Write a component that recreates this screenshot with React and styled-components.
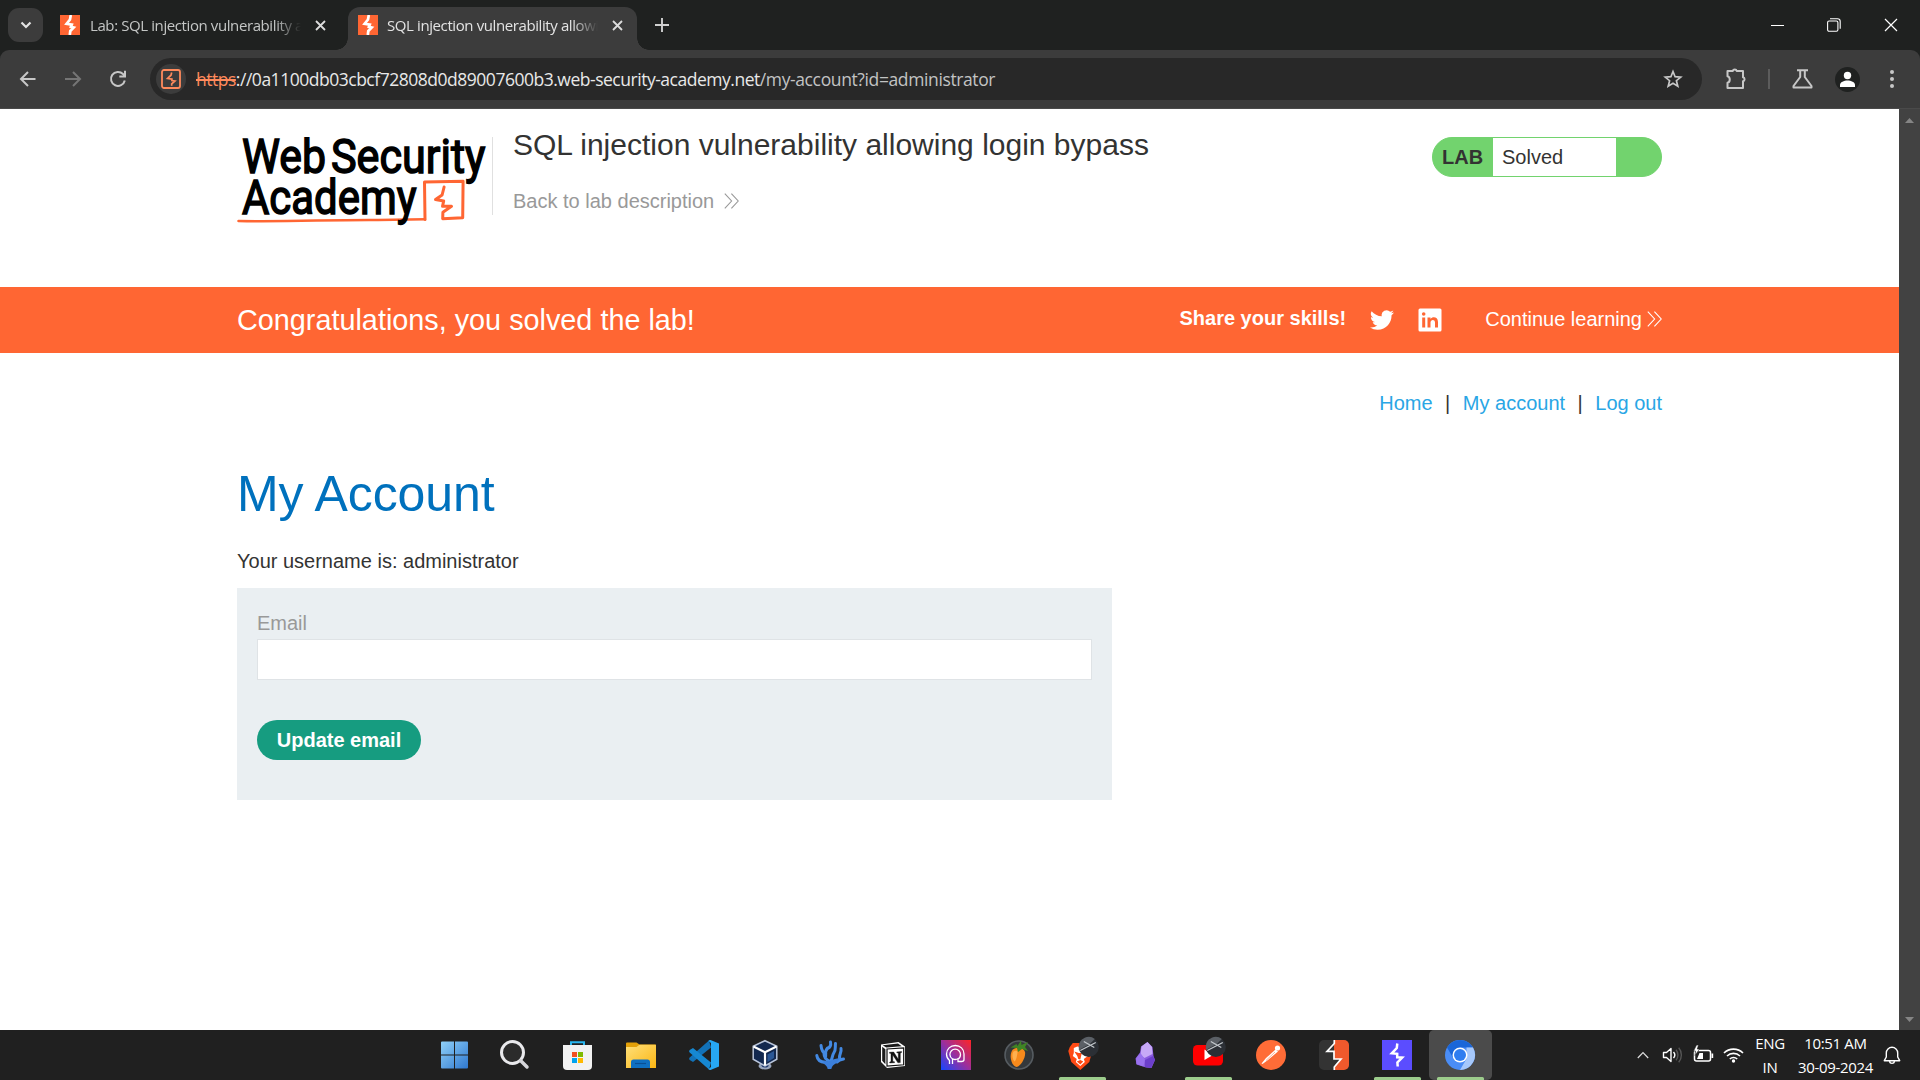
import React from 'react';
import styled, { createGlobalStyle } from 'styled-components';

const Global = createGlobalStyle`
  * { box-sizing: border-box; }
  html, body { margin: 0; padding: 0; }
  body { background: #fff; overflow: hidden; }
  svg { display: block; flex: none; }
`;

const Screen = styled.div`
  width: 1920px;
  height: 1080px;
  display: flex;
  flex-direction: column;
  overflow: hidden;
  font-family: "Liberation Sans", Arial, sans-serif;
`;

/* ---------- browser chrome ---------- */
const ui = `"Open Sans", "Noto Sans", sans-serif`;

const TabStrip = styled.div`
  height: 50px;
  background: #1f2120;
  display: flex;
  align-items: flex-end;
  font-family: ${ui};
`;
const TabSearch = styled.div`
  width: 35px;
  height: 34px;
  margin: 0 5px 8px 8px;
  border-radius: 11px;
  background: #3c3c3c;
  display: grid;
  place-items: center;
`;
const Tab = styled.div`
  height: 43px;
  width: ${p => p.$width}px;
  padding: 0 0 7px ${p => p.$pad}px;
  display: flex;
  align-items: center;
  border-radius: 12px 12px 0 0;
  background: ${p => (p.$active ? '#3c3c3c' : 'transparent')};
  color: ${p => (p.$active ? '#e3e3e3' : '#c4c6c5')};
`;
const TabTitle = styled.div`
  width: 211px;
  margin: 0 14px 0 ${p => p.$left}px;
  overflow: hidden;
  white-space: nowrap;
  font-size: 15px;
  line-height: 22px;
  letter-spacing: -0.4px;
  mask-image: linear-gradient(90deg, #000 185px, transparent 211px);
`;
const TabCurve = styled.div`
  width: 12px;
  height: 12px;
  background: radial-gradient(circle at ${p => (p.$left ? '0 0' : '100% 0')}, transparent 11.5px, #3c3c3c 12px);
`;
const NewTab = styled.div`
  width: 26px;
  height: 50px;
  display: grid;
  place-items: center;
`;
const WindowButtons = styled.div`
  margin-left: auto;
  height: 50px;
  display: flex;
  align-items: center;
  gap: 43px;
  padding-right: 22px;
`;
const ToolbarBack = styled.div`background: #1f2120;`;
const Toolbar = styled.div`
  height: 59px;
  border-radius: 9px 9px 0 0;
  background: #3c3c3c;
  border-bottom: 1px solid #4a4a4a;
  display: flex;
  align-items: center;
  font-family: ${ui};
`;
const NavButtons = styled.div`
  width: 150px;
  display: flex;
  gap: 25px;
  padding-left: 17.5px;
`;
const AddressBar = styled.div`
  width: 1552px;
  height: 42px;
  border-radius: 21px;
  background: #282828;
  display: flex;
  align-items: center;
  padding: 0 19px 0 6px;
`;
const SiteBadge = styled.div`
  width: 30px;
  height: 30px;
  border-radius: 15px;
  background: #3c3c3c;
  display: grid;
  place-items: center;
  margin-right: 10px;
`;
const Url = styled.div`
  flex: 1;
  font-size: 17.5px;
  line-height: 26px;
  letter-spacing: -0.48px;
  white-space: nowrap;
  color: #e8e8e8;
`;
const Scheme = styled.span`
  color: #ff8a5c;
  text-decoration: line-through;
  text-decoration-thickness: 2px;
`;
const UrlPath = styled.span`
  color: #c2c3c3;
  letter-spacing: -0.38px;
`;
const ToolbarIcons = styled.div`
  display: flex;
  align-items: center;
  padding-left: 22px;
`;
const Divider = styled.div`
  width: 2px;
  height: 20px;
  background: #5c5c5c;
  margin: 0 22px 0 20px;
`;
const Avatar = styled.div`
  width: 25px;
  height: 25px;
  border-radius: 50%;
  background: #1f2120;
  display: grid;
  place-items: center;
  margin: 0 30px 0 21px;
`;

/* ---------- web page ---------- */
const Viewport = styled.div`
  height: 921px;
  display: flex;
  background: #fff;
`;
const Page = styled.main`
  width: 1899px;
  color: #333332;
  font-size: 20px;
  line-height: 30px;
`;
const Scrollbar = styled.div`
  width: 21px;
  background: #424242;
  display: flex;
  flex-direction: column;
  justify-content: space-between;
  align-items: center;
  padding: 9px 0 8px;
`;
const Container = styled.div`
  width: 1425px;
  margin: 0 auto;
`;
const LabHeader = styled(Container)`
  height: 178px;
  display: flex;
`;
const LogoBox = styled.div`
  width: 256px;
  height: 78px;
  margin-top: 28px;
  border-right: 1px solid #e0e0e0;
`;
const TitleBox = styled.div`
  flex: 1;
  padding: 17px 0 0 20px;
`;
const LabTitle = styled.h2`
  margin: 0;
  font-size: 30px;
  line-height: 38px;
  font-weight: 400;
  white-space: nowrap;
`;
const BackLink = styled.a`
  display: flex;
  align-items: center;
  gap: 10px;
  margin-top: 22px;
  color: #999;
`;
const LabStatus = styled.div`
  width: 230px;
  height: 40px;
  margin-top: 28px;
  border: 1px solid #72d36e;
  border-radius: 20px;
  background: #72d36e;
  overflow: hidden;
  display: flex;
  line-height: 38px;
`;
const LabTag = styled.div`
  width: 60px;
  padding-left: 9px;
  font-weight: 700;
`;
const LabState = styled.div`
  width: 123px;
  padding-left: 9px;
  background: #fff;
`;
const Banner = styled.section`
  height: 66px;
  background: #ff6633;
  color: #fff;
`;
const BannerRow = styled(Container)`
  height: 66px;
  display: flex;
  align-items: center;
`;
const Congrats = styled.div`
  flex: 1;
  font-size: 28.8px;
`;
const Share = styled.div`
  font-weight: 700;
  padding-bottom: 4px;
`;
const ShareIcons = styled.div`
  display: flex;
  gap: 24px;
  margin: 0 43px 0 24px;
`;
const Continue = styled.div`
  display: flex;
  align-items: center;
  gap: 5px;
  padding-bottom: 2px;
`;
const TopLinks = styled(Container)`
  margin-top: 35px;
  display: flex;
  justify-content: flex-end;
  gap: 12.5px;
`;
const Link = styled.a`color: #29a6e5;`;
const Heading = styled.h1`
  margin: 45px 0 0;
  font-size: 50px;
  line-height: 62px;
  letter-spacing: -0.1px;
  font-weight: 400;
  color: #0071bd;
`;
const Username = styled.p`margin: 21px 0 0;`;
const Form = styled.form`
  width: 875px;
  height: 212px;
  margin-top: 12px;
  padding: 20px;
  background: #eaeff2;
`;
const Label = styled.label`
  display: block;
  color: #999;
`;
const Input = styled.input`
  display: block;
  width: 835px;
  height: 41px;
  margin-top: 1px;
  border: 1px solid #dfe3e6;
  background: #fff;
  outline: none;
`;
const Submit = styled.button`
  display: block;
  width: 164px;
  height: 40px;
  margin-top: 40px;
  padding: 0;
  border: 0;
  border-radius: 20px;
  background: #169c80;
  color: #fff;
  font: 700 20px/40px "Liberation Sans", Arial, sans-serif;
`;

/* ---------- taskbar ---------- */
const Taskbar = styled.footer`
  height: 50px;
  background: #202020;
  display: flex;
  padding-left: 421px;
  font-family: ${ui};
  color: #fff;
`;
const TaskItem = styled.div`
  width: 63px;
  height: 50px;
  display: flex;
  flex-direction: column;
  align-items: center;
  justify-content: space-between;
  padding-top: 10px;
  border-radius: 5px;
  background: ${p => (p.$active ? '#4b4b4b' : 'transparent')};
`;
const Indicator = styled.div`
  width: 47px;
  height: 3px;
  border-radius: 1.5px 1.5px 0 0;
  background: ${p => (p.$on ? '#9ccc8c' : 'transparent')};
`;
const Tray = styled.div`
  margin-left: auto;
  display: flex;
  align-items: center;
  padding-right: 19px;
`;
const TrayIcons = styled.div`
  display: flex;
  align-items: center;
  gap: 9px;
  margin-right: 9px;
`;
const TrayArrow = styled.div`margin-right: 4px;`;
const TrayText = styled.div`
  width: ${p => p.$width}px;
  text-align: center;
  font-size: 15px;
  line-height: 24px;
  letter-spacing: ${p => p.$track}px;
  white-space: nowrap;
  margin-right: ${p => p.$gap}px;
`;

/* ---------- drawings ---------- */
const Favicon = () => (
  <svg width="20" height="20" viewBox="0 0 20 20">
    <rect width="20" height="20" fill="#ff6633" />
    <path d="M10.800 0L10 4.500 6.600 8.800l5.200.8-.9 2.300 2.800.7L10.300 16l-.5 4" fill="none" stroke="#fff" strokeWidth="2.700" />
  </svg>
);
const Cross = ({ size = 11, w = 1.8, color = '#dcdcdc' }) => (
  <svg width={size} height={size} viewBox={`0 0 ${size} ${size}`}>
    <path d={`M1 1L${size - 1} ${size - 1}M${size - 1} 1L1 ${size - 1}`} stroke={color} strokeWidth={w} />
  </svg>
);
const Chevrons = ({ color }) => (
  <svg width="15" height="16" viewBox="0 0 15 16">
    <path d="M.8.6L7.6 8 .8 15.4M7.4.6L14.2 8l-6.8 7.4" fill="none" stroke={color} strokeWidth="1.1" />
  </svg>
);
const AcademyLogo = () => (
  <svg width="254" height="92" viewBox="237 137 254 92">
    <g fill="none" stroke="#ff6633" strokeLinejoin="round" strokeLinecap="round">
      <path d="M238.500 221C290 222 330 219.600 378 220L425 219.200" strokeWidth="2.500" />
      <path d="M425 219.400L424.500 182l38.600-.8-.4 36.600-20 1 .2-6.500 8.600-6h-9l1.200-5.300-8.200-1.500 6.600-4.500 2-8" strokeWidth="3" />
    </g>
    <g fill="#000" stroke="#000" strokeWidth="1.500" fontFamily="Roboto, sans-serif" fontWeight="400" fontSize="47.500">
      <text x="242" y="172.500" textLength="84" lengthAdjust="spacingAndGlyphs">Web</text>
      <text x="331" y="172.500" textLength="154.500" lengthAdjust="spacingAndGlyphs">Security</text>
      <text x="242" y="213.500" textLength="174.500" lengthAdjust="spacingAndGlyphs">Academy</text>
    </g>
  </svg>
);

const V = ({ children, shift = 0 }) => (
  <svg width="31" height="33" viewBox="0 -3 31 33" style={{ marginTop: -3 }} overflow="visible">
    <g transform={`translate(${shift} 0)`}>{children}</g>
  </svg>
);

const Planet = () => (
  <g>
    <circle cx="21" cy="7" r="10" fill="#2b2f35" />
    <path d="M11 6A10 10 0 0 1 27 -1l-5 5-11 6z" fill="#5b6066" />
    <path d="M12.500 10.500L28 2.500M16 1.500L26.500 7.500" stroke="#c3c8cc" strokeWidth="1.300" />
  </g>
);

const apps = [
  { icon: (
    <V shift={3}>
      <defs><linearGradient id="win" x1="0" y1="0" x2="1" y2="1"><stop offset="0" stopColor="#8fd0f8" /><stop offset="1" stopColor="#2f78d0" /></linearGradient></defs>
      <path d="M1 2.500a1 1 0 0 1 1-1h12v13H1zM15 1.500H27a1 1 0 0 1 1 1v12H15zM1 15.500h13v13H2a1 1 0 0 1-1-1zM15 15.500H28v12a1 1 0 0 1-1 1H15z" fill="url(#win)" />
    </V>) },
  { icon: (
    <V>
      <circle cx="12.500" cy="12.500" r="11" fill="rgba(255,255,255,.05)" stroke="#e9e9ec" strokeWidth="3" />
      <path d="M20.500 20.500l6.500 6.500" stroke="#d6d6da" strokeWidth="3.500" strokeLinecap="round" />
    </V>) },
  { icon: (
    <V>
      <path d="M8 7V2.200h13V7" fill="none" stroke="#29b6f0" strokeWidth="2" />
      <path d="M0 5h29v21a4 4 0 0 1-4 4H4a4 4 0 0 1-4-4z" fill="#f2f2f2" />
      <path d="M9 12h5v5H9z" fill="#f25022" /><path d="M15 12h5v5h-5z" fill="#7fba00" />
      <path d="M9 18h5v5H9z" fill="#00a4ef" /><path d="M15 18h5v5h-5z" fill="#ffb900" />
    </V>) },
  { icon: (
    <V>
      <defs><linearGradient id="fold" x1="0" y1="0" x2="1" y2="1"><stop offset="0" stopColor="#ffe07a" /><stop offset="1" stopColor="#fbb613" /></linearGradient></defs>
      <path d="M0 3.500a1 1 0 0 1 1-1h9.500l3 2H29a1 1 0 0 1 1 1V12H0z" fill="#e3a008" />
      <path d="M0 7h10.500l3-2.200H30V28H0z" fill="url(#fold)" />
      <path d="M5 28v-6a2.500 2.500 0 0 1 2.500-2.500h14A2.500 2.500 0 0 1 24 22v6z" fill="#0f6fc0" />
      <path d="M9 23.500h11" stroke="#0a4f94" strokeWidth="1.200" />
    </V>) },
  { icon: (
    <V>
      <path d="M22 7.500L4 22l-3.300-2c-.8-.8-.7-1.800 0-2.500L20 .500z" fill="#1272b8" />
      <path d="M22 22.500L4 8 .700 10c-.8.800-.7 1.800 0 2.500L20 29.500z" fill="#1688d2" />
      <path d="M21.500 0L30 3.500v23L21.500 30c-1 0-1.500-.3-2-1l2.500-2V3l-2.500-2c.5-.7 1-1 2-1z" fill="#27a7f2" />
    </V>) },
  { icon: (
    <V>
      <ellipse cx="13" cy="26" rx="6.500" ry="3.500" fill="#9aa6bd" />
      <ellipse cx="13" cy="25.500" rx="3.500" ry="2" fill="#213c70" />
      <path d="M13 .700l11.800 5.500v13L13 26 1.200 19.200v-13z" fill="#12284f" stroke="#b9c5da" strokeWidth="1.500" />
      <path d="M1.500 6.500L13 12.200 24.500 6.500M13 12v13.500" fill="none" stroke="#fff" strokeWidth="2.200" />
      <path d="M15.500 14.500l6.500-3.500v7l-6.500 4z" fill="#2a5796" />
    </V>) },
  { icon: (
    <V>
      <g fill="none" stroke="#4389e2" strokeWidth="3" strokeLinecap="round" strokeLinejoin="round">
        <path d="M1.800 15.500c.5 4.500 3.500 6.500 8.500 7M6 5.500c.5 5 1.500 7 4.800 8.500M9 13.500c0 4 2 6 5 7.500M12.500 8c-2 2.500-2.500 5-1.800 8M15.500 2c.8 4-.5 5.500-3 6.500M20.500 3.500c-.5 4 .5 6-1.500 9s-1.500 6-3 8M26 8.500c.8 4-2 5.500-1.500 10M28.500 19c-3 .5-5 1-6.500 3" />
      </g>
      <path d="M8.500 20.500c3 .8 5.500 1.200 7.500 0 2.500-1.500 5-1.500 8.500-2.500-1 4.500-4 5.500-6.500 7.500-.8 1-1.200 2-1.700 3.500h-3.600c-.5-2.500-1.700-4-4.200-5.500z" fill="#3b7fdb" />
    </V>) },
  { icon: (
    <V shift={2.5}>
      <path d="M.500 4.500L18 2l6.500 4.500v19.500L6.500 28 .500 22z" fill="#fff" />
      <path d="M2.200 5.300L17.500 3.500l3.700 2.700L5.700 7.500zM1.700 6.800L4.900 9.300v15L1.700 20.800z" fill="#1b1b1b" />
      <path d="M6.500 9l16.700-1.200v17L6.500 26.200z" fill="#fff" stroke="#111" strokeWidth="1.200" />
      <path d="M9 12.300l4.200-.3 4.600 7.300v-6.200l-1.500-.4v-.8l4.800-.4v1l-1.300.5v9.600l-2.400.2-5.100-7.900v6.500l1.700.4v.9l-4.800.3v-.9l1.300-.5v-8.200L9 13.200z" fill="#111" stroke="#111" strokeWidth=".4" />
    </V>) },
  { icon: (
    <V>
      <defs><linearGradient id="ai" x1="0" y1="1" x2="1" y2="0"><stop offset="0" stopColor="#1446ff" /><stop offset=".5" stopColor="#9c2f9c" /><stop offset="1" stopColor="#ff2424" /></linearGradient></defs>
      <rect width="30" height="30" fill="url(#ai)" />
      <g fill="none" stroke="#fff" strokeWidth="1.300">
        <path d="M8.500 24v-3.500C6 18.500 5.500 16 5.500 14c0-5 4-8.500 8.800-8.500 5 0 8.700 3.500 8.700 8.500v5.500c0 1.500-1 2-2.500 2h-3.500V19c1.800-1 2.500-2.700 2.500-4.500a5.300 5.300 0 0 0-10.600 0c0 2 1 3.500 2.600 4.500v5" />
        <path d="M17 18.800c-1.300.7-4 .7-5.500 0" />
      </g>
    </V>) },
  { icon: (
    <V>
      <circle cx="15" cy="15" r="14" fill="#34383b" stroke="#565c61" strokeWidth="1.600" />
      <path d="M9 9.500c4-3 11-2 12 2.500 1 5-4 14-8.500 15C7 26 4.500 14 9 9.500z" fill="#f78a1c" />
      <path d="M9.500 11.500c2-1.500 4-1 4 1-.5 4-1.500 8-3 9-2-2-3-8-1-10z" fill="#ffb04e" />
      <path d="M6.500 7.500l6-3.500 1 2 3.500-5.500.5 4.500L24 2l-3 5 3 4-6-2-4 3-1-4z" fill="#3f8424" />
    </V>) },
  { on: true, icon: (
    <V shift={.8}>
      <path d="M5 3h12l5 2 2.500 6-3 11-9 8-9-8L.500 11l1.500-4z" fill="#ff4a14" />
      <path d="M6 8l3.500-1.500 3 .5 3-.5L20 9l-1 4 1 3-4 3 1 3-4.500 4L8 22l1-3-4-3 1-3z" fill="#fff" />
      <path d="M6.500 11.500l4.500 1.500h3l-1.500 6.500-2-.5-1-3zM9 21.500l3.500-1.500 3 1.500-3 3z" fill="#ff4a14" />
      <Planet />
    </V>) },
  { icon: (
    <V shift={3.5}>
      <path d="M14 2l5 5 1 9 1.500 4-3.500 8-5.500-.5L3 24.500l-1-6 4.500-6 1-6z" fill="#8a5be0" />
      <path d="M14 2L8 6.500 7 15l4 3 8-4-.5-7z" fill="#c7a9f7" />
      <path d="M7 13l-4.500 5.500.5 5.500 7 2.500 1.500-7z" fill="#9a72ee" /><path d="M11.500 20l8-4 2 4-4 8-6-1z" fill="#6c3fcb" />
    </V>) },
  { on: true, icon: (
    <V>
      <rect x="0" y="5" width="30" height="20.500" rx="4.500" fill="#f00" />
      <path d="M11.500 9.500l8.500 5.500-8.500 5z" fill="#fff" />
      <g transform="translate(1.800 0)"><Planet /></g>
    </V>) },
  { icon: (
    <V>
      <circle cx="15" cy="15" r="15" fill="#ff6c37" />
      <circle cx="21.500" cy="8" r="2.600" fill="#fff" />
      <path d="M19.500 9.500l2.500 2-10 8.500-5.500 4-1-.5 4.500-5.500z" fill="#fff" />
      <path d="M19 12l-9 8.500" stroke="#ff9c78" strokeWidth=".8" />
    </V>) },
  { icon: (
    <V>
      <path d="M15 0h10a5 5 0 0 1 5 5v20a5 5 0 0 1-5 5H15z" fill="#f0592c" />
      <path d="M15 0H5a5 5 0 0 0-5 5v20a5 5 0 0 0 5 5h10v-3l7.500-8H15z" fill="#333" />
      <path d="M15.300 0v3.500L8 11.300h7v7.700h7L15.300 27v3" fill="none" stroke="#fff" strokeWidth="1.700" />
    </V>) },
  { on: true, icon: (
    <V>
      <rect width="30" height="30" fill="#5b4dff" />
      <path d="M15.300 3.500l-.5 4.500-5 5.300 5.400.5v3.400l5 .3-4.800 5 .3 4" fill="none" stroke="#fff" strokeWidth="2.500" />
    </V>) },
  { on: true, active: true, icon: (
    <V>
      <circle cx="15" cy="15" r="15" fill="#4a8df6" />
      <path d="M2 7.500A15 15 0 0 1 28 7.500H15L8.500 18.500z" fill="#1a66d8" />
      <path d="M28 7.500A15 15 0 0 1 15 30l6.500-11.200 0-11.300z" fill="#a6c8fb" />
      <circle cx="15" cy="15" r="7.500" fill="#fff" /><circle cx="15" cy="15" r="6" fill="#2f7df0" />
    </V>) },
];

export default function App() {
  return (
    <Screen>
      <Global />
      <TabStrip>
        <TabSearch>
          <svg width="12" height="9" viewBox="0 0 12 9"><path d="M1.500 1.500L6 6l4.500-4.500" fill="none" stroke="#e3e3e3" strokeWidth="2.200" /></svg>
        </TabSearch>
        <Tab $width={288} $pad={12}>
          <Favicon />
          <TabTitle $left={10}>Lab: SQL injection vulnerability allowing login bypass</TabTitle>
          <Cross />
        </Tab>
        <TabCurve $left />
        <Tab $width={289} $pad={10} $active>
          <Favicon />
          <TabTitle $left={9}>SQL injection vulnerability allowing login bypass</TabTitle>
          <Cross />
        </Tab>
        <TabCurve />
        <NewTab>
          <svg width="14" height="14" viewBox="0 0 14 14"><path d="M7 0v14M0 7h14" stroke="#d0d0d0" strokeWidth="1.900" /></svg>
        </NewTab>
        <WindowButtons>
          <svg width="13" height="13" viewBox="0 0 13 13"><path d="M0 6.500h13" stroke="#fff" /></svg>
          <svg width="14" height="14" viewBox="0 0 14 14" fill="none" stroke="#fff" strokeWidth="1.100">
            <rect x=".6" y="3" width="10.300" height="10.300" rx="1.500" /><path d="M3 .8h7.500a2.700 2.700 0 0 1 2.700 2.700v7.300" />
          </svg>
          <Cross size={14} w={1.200} color="#fff" />
        </WindowButtons>
      </TabStrip>
      <ToolbarBack>
        <Toolbar>
          <NavButtons>
            <svg width="20" height="20" viewBox="0 0 20 20" fill="none" stroke="#c7c7c7" strokeWidth="2"><path d="M17.500 10H3.500M10 3L3 10l7 7" /></svg>
            <svg width="20" height="20" viewBox="0 0 20 20" fill="none" stroke="#757575" strokeWidth="2"><path d="M2 10h14.500M10 3l7 7-7 7" /></svg>
            <svg width="20" height="20" viewBox="0 0 20 20" fill="none" stroke="#c7c7c7" strokeWidth="2"><path d="M16.800 11.500A7 7 0 1 1 15 5l1.500 1.500M17 1.800v5.700h-5.700" /></svg>
          </NavButtons>
          <AddressBar>
            <SiteBadge>
              <svg width="20" height="20" viewBox="0 0 20 20"><rect x="1" y="1" width="18" height="18" rx="2" fill="none" stroke="#ff8a5c" strokeWidth="1.800" /><path d="M10.700 3.500L10 6.200 6.600 9.500l4.300.6v1.500l3 .4-3.200 2.800v2" fill="none" stroke="#ff8a5c" strokeWidth="1.700" /></svg>
            </SiteBadge>
            <Url><Scheme>https</Scheme>://0a1100db03cbcf72808d0d89007600b3.web-security-academy.net<UrlPath>/my-account?id=administrator</UrlPath></Url>
            <svg width="20" height="20" viewBox="0 0 20 20"><path d="M10 2.500l2.100 5.200 5.600.4-4.300 3.600 1.400 5.500-4.800-3-4.800 3 1.400-5.500L2.300 8.100l5.600-.4z" fill="none" stroke="#c7c7c7" strokeWidth="1.700" /></svg>
          </AddressBar>
          <ToolbarIcons>
            <svg width="24" height="24" viewBox="0 0 24 24"><path d="M3.500 4h5.300a2 2 0 0 1 3.900 0h6.300v6.300a2 2 0 0 1 0 3.900V21H3.500v-5.200c3-.6 3-6 0-6.600z" fill="none" stroke="#c7c7c7" strokeWidth="2" strokeLinejoin="round" /></svg>
            <Divider />
            <svg width="22" height="22" viewBox="0 0 22 22" fill="none" stroke="#c7c7c7" strokeWidth="2" strokeLinejoin="round"><path d="M5 2.200h11M8.200 2.500v6.500L1.500 18v1.500h18V18L12.800 9V2.500" /></svg>
            <Avatar>
              <svg width="17" height="17" viewBox="0 0 17 17" fill="#fff"><circle cx="8.500" cy="4.500" r="3.700" /><path d="M1 16v-2c0-3 4-4.500 7.500-4.500S16 11 16 14v2z" /></svg>
            </Avatar>
            <svg width="4" height="20" viewBox="0 0 4 20" fill="#c7c7c7"><circle cx="2" cy="3" r="2" /><circle cx="2" cy="10" r="2" /><circle cx="2" cy="17" r="2" /></svg>
          </ToolbarIcons>
        </Toolbar>
      </ToolbarBack>

      <Viewport>
        <Page>
          <LabHeader>
            <LogoBox><AcademyLogo /></LogoBox>
            <TitleBox>
              <LabTitle>SQL injection vulnerability allowing login bypass</LabTitle>
              <BackLink>Back to lab description <Chevrons color="#999" /></BackLink>
            </TitleBox>
            <LabStatus>
              <LabTag>LAB</LabTag>
              <LabState>Solved</LabState>
            </LabStatus>
          </LabHeader>
          <Banner>
            <BannerRow>
              <Congrats>Congratulations, you solved the lab!</Congrats>
              <Share>Share your skills!</Share>
              <ShareIcons>
                <svg width="24" height="24" viewBox="0 0 24 24" fill="#fff"><path d="M23.950 4.570a10 10 0 0 1-2.820.770 4.960 4.960 0 0 0 2.160-2.720c-.950.550-2 .950-3.130 1.180a4.920 4.920 0 0 0-8.380 4.480C7.690 8.100 4.070 6.130 1.640 3.160a4.920 4.920 0 0 0 1.520 6.570 4.900 4.900 0 0 1-2.230-.610v.060c0 2.380 1.700 4.370 3.950 4.820a5 5 0 0 1-2.210.090 4.940 4.940 0 0 0 4.600 3.420A9.870 9.870 0 0 1 0 19.540a13.990 13.990 0 0 0 7.550 2.210c9.050 0 14-7.500 14-13.990 0-.210 0-.420-.020-.630a9.940 9.940 0 0 0 2.460-2.550z" /></svg>
                <svg width="24" height="24" viewBox="0 0 24 24"><rect x=".5" y=".5" width="23" height="23" rx="1.500" fill="#fff" /><path d="M4.200 9.500h3v10h-3zM9.500 9.500h3V11c1.800-2.700 7.500-2.500 7.500 3v5.500h-3V14.500c0-3.500-4.500-3.200-4.500 0v5h-3z" fill="#ff6633" /><circle cx="5.700" cy="6" r="1.800" fill="#ff6633" /></svg>
              </ShareIcons>
              <Continue>Continue learning <Chevrons color="#fff" /></Continue>
            </BannerRow>
          </Banner>
          <TopLinks><Link>Home</Link><span>|</span><Link>My account</Link><span>|</span><Link>Log out</Link></TopLinks>
          <Container>
            <Heading>My Account</Heading>
            <Username>Your username is: administrator</Username>
            <Form>
              <Label>Email</Label>
              <Input type="text" />
              <Submit type="button">Update email</Submit>
            </Form>
          </Container>
        </Page>
        <Scrollbar>
          <svg width="9" height="5" viewBox="0 0 9 5"><path d="M0 5L4.500 0 9 5z" fill="#858585" /></svg>
          <svg width="9" height="5" viewBox="0 0 9 5"><path d="M0 0l4.500 5L9 0z" fill="#858585" /></svg>
        </Scrollbar>
      </Viewport>

      <Taskbar>
        {apps.map((a, i) => (
          <TaskItem key={i} $active={a.active}>{a.icon}<Indicator $on={a.on} /></TaskItem>
        ))}
        <Tray>
          <TrayIcons>
            <TrayArrow>
              <svg width="12" height="8" viewBox="0 0 12 8"><path d="M.8 7L6 1.500 11.200 7" fill="none" stroke="#ddd" strokeWidth="1.200" /></svg>
            </TrayArrow>
            <svg width="22" height="20" viewBox="0 0 22 20" fill="none" stroke="#fff" strokeWidth="1.400"><path d="M1.500 7.500h3L9 3.500v13l-4.500-4h-3z" strokeLinejoin="round" /><path d="M11.500 7a4.500 4.500 0 0 1 0 6" /><path d="M14 4.800a8 8 0 0 1 0 10.400M16.700 2.800a11 11 0 0 1 0 14.400" stroke="#555" /></svg>
            <svg width="21" height="20" viewBox="0 0 21 20"><rect x="1.500" y="5.500" width="16" height="10.500" rx="2" fill="none" stroke="#fff" strokeWidth="1.500" /><path d="M18.500 8.500h1.700v4.500h-1.700z" fill="#fff" /><path d="M4 14l2.500-6H10v6z" fill="#fff" /><path d="M3.500 0L.5 6h2l-.5 4.500L6.500 4H4.300L5.500 0z" fill="#fff" stroke="#202020" strokeWidth=".6" /></svg>
            <svg width="21" height="18" viewBox="0 0 21 18" fill="none" stroke="#fff" strokeWidth="1.600"><path d="M1 7a13.500 13.500 0 0 1 19 0M4 10a9.300 9.300 0 0 1 13 0M6.800 13a5.300 5.300 0 0 1 7.400 0" /><circle cx="10.500" cy="15" r="1.700" fill="#fff" stroke="none" /></svg>
          </TrayIcons>
          <TrayText $width={34} $gap={10} $track={-0.3}>ENG<br />IN</TrayText>
          <TrayText $width={77} $gap={9} $track={-0.35}>10:51 AM<br />30-09-2024</TrayText>
          <svg width="18" height="20" viewBox="0 0 18 20"><path d="M3.300 8a5.700 5.700 0 0 1 11.400 0v4l2 3.700H1.300l2-3.700zM6.500 16.500c.5 2.500 4.500 2.500 5 0" fill="none" stroke="#fff" strokeWidth="1.400" strokeLinejoin="round" /></svg>
        </Tray>
      </Taskbar>
    </Screen>
  );
}
